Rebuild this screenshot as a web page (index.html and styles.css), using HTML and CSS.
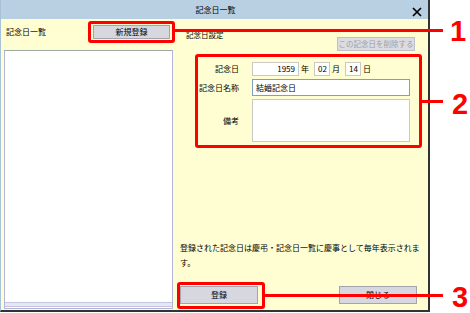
FILE: index.html
```html
<!DOCTYPE html>
<html lang="ja">
<head>
<meta charset="utf-8">
<link rel="stylesheet" href="styles.css">
</head>
<body>
<div class="page">
  <div class="window">
    <div class="titlebar">
      <span class="title">記念日一覧</span>
      <svg class="close" width="10" height="10" viewBox="0 0 10 10"><path d="M1 1L9 9M9 1L1 9" stroke="#000" stroke-width="1.7" fill="none"/></svg>
    </div>
    <div class="body">
      <div class="left">
        <div class="left-head">
          <span class="label">記念日一覧</span>
          <button class="btn btn-new">新規登録</button>
        </div>
        <div class="list"></div>
      </div>
      <div class="right">
        <div class="right-head">
          <span class="section">記念日設定</span>
          <button class="btn btn-delete">この記念日を削除する</button>
        </div>
        <div class="form">
          <span class="flabel">記念日</span>
          <div class="date-row">
            <span class="input year">1959</span><span class="unit">年</span>
            <span class="input md">02</span><span class="unit">月</span>
            <span class="input md">14</span><span class="unit">日</span>
          </div>
          <span class="flabel">記念日名称</span>
          <span class="input name">結婚記念日</span>
          <span class="flabel">備考</span>
          <span class="input notes"></span>
        </div>
        <p class="note">登録された記念日は慶弔・記念日一覧に慶事として毎年表示されます。</p>
        <div class="actions">
          <button class="btn btn-action">登録</button>
          <button class="btn btn-action">閉じる</button>
        </div>
      </div>
    </div>
  </div>

  <div class="rbox box1"></div>
  <div class="rline line1"></div>
  <span class="num num1">1</span>

  <div class="rbox box2"></div>
  <div class="rline line2"></div>
  <span class="num num2">2</span>

  <div class="rbox box3"></div>
  <div class="rline line3"></div>
  <span class="num num3">3</span>
</div>
</body>
</html>
```

FILE: styles.css
```css
* { box-sizing: border-box; }
html, body { margin: 0; padding: 0; background: #fff; }
body {
  font-family: "Noto Sans CJK JP", "Noto Sans", sans-serif;
  font-size: 8px;
  color: #000;
}
.page { position: relative; width: 470px; height: 313px; }

.window {
  width: 430px;
  height: 312px;
  border-left: 1px solid #a8c2d8;
  border-right: 2px solid #333;
  border-bottom: 2px solid #333;
  display: flex;
  flex-direction: column;
}
.titlebar {
  height: 19px;
  background: #b9d0e2;
  position: relative;
  display: flex;
  align-items: center;
  justify-content: center;
}
.title { font-size: 8px; line-height: 10px; margin-left: 2px; }
.close { position: absolute; right: 6px; top: 7px; }

.body {
  flex: 1;
  background: #fffed2;
  display: flex;
}
.left { width: 175px; display: flex; flex-direction: column; }
.left-head {
  height: 26px;
  margin-bottom: 5px;
  display: grid;
  grid-template-columns: 87px 77px;
  align-items: center;
  padding-left: 5px;
}
.label { line-height: 10px; }
.btn {
  font-family: inherit;
  font-size: 8px;
  line-height: 10px;
  padding: 0;
  margin: 0;
  background: #d7d7e0;
  border: 1px solid #a4a4ac;
  border-radius: 0;
  color: #000;
}
.btn-new { height: 14px; width: 77px; }
.list {
  margin-left: 3px;
  width: 169px;
  flex: 1;
  margin-bottom: 1px;
  background: #fff;
  border: 1px solid #b3b6dc;
  border-top-color: #9aa8a4;
  position: relative;
}
.list::after {
  content: "";
  position: absolute;
  left: 0; right: 0; bottom: 1px;
  height: 3px;
  border-top: 1px solid #c4c6e2;
  border-bottom: 1px solid #c4c6e2;
  background: #e8e8f2;
}

.right {
  flex: 1;
  display: flex;
  flex-direction: column;
  padding-left: 7px;
  padding-right: 7px;
}
.right-head {
  height: 32px;
  display: flex;
  justify-content: space-between;
  align-items: flex-start;
}
.section { margin-top: 11px; margin-left: 6px; line-height: 10px; font-size: 7.5px; }
.btn-delete {
  margin-top: 18px;
  margin-right: 7px;
  width: 78px;
  height: 14px;
  color: #a0a0a0;
  background: #dcdce2;
  border-color: #c0c0c6;
  font-size: 7.5px;
}
.form {
  margin-top: 11px;
  display: grid;
  grid-template-columns: 59px 158px;
  column-gap: 13px;
  grid-template-rows: 14px 17px 43px;
  row-gap: 3px;
  align-items: center;
}
.form > .flabel { text-align: right; line-height: 10px; }
.date-row { display: flex; align-items: center; height: 14px; }
.input {
  display: block;
  background: #fff;
  border: 1px solid #c9c9c9;
  line-height: 10px;
}
.year { width: 47px; height: 14px; text-align: right; padding: 1px 3px 0 0; }
.md { width: 16px; height: 14px; text-align: right; padding: 1px 2px 0 0; }
.unit { margin-left: 2px; margin-right: 5px; line-height: 10px; }
.name { height: 17px; border-color: #7f9fc6; padding: 3px 0 0 3px; }
.notes { height: 43px; }

.note {
  margin: auto 0 0 0;
  width: 242px;
  line-height: 15px;
}
.actions {
  margin-top: 16px;
  margin-bottom: 6px;
  display: flex;
  justify-content: space-between;
  width: 237px;
}
.btn-action { width: 78px; height: 18px; }

.rbox {
  position: absolute;
  border: 3px solid #ff0000;
  border-radius: 3px;
}
.box1 { left: 88px; top: 21px; width: 87px; height: 22px; }
.box2 { left: 195px; top: 54px; width: 227px; height: 94px; }
.box3 { left: 177px; top: 282px; width: 88px; height: 27px; }
.rline { position: absolute; height: 3px; background: #ff0000; }
.line1 { left: 175px; top: 29px; width: 268px; }
.line2 { left: 422px; top: 100px; width: 21px; }
.line3 { left: 265px; top: 294px; width: 178px; }
.num {
  position: absolute;
  font-family: "Liberation Sans", Arial, sans-serif;
  font-weight: bold;
  font-size: 29px;
  line-height: 29px;
  color: #ff0000;
}
.num1 { left: 450px; top: 17px; }
.num2 { left: 452px; top: 90px; }
.num3 { left: 452px; top: 283px; }
```
